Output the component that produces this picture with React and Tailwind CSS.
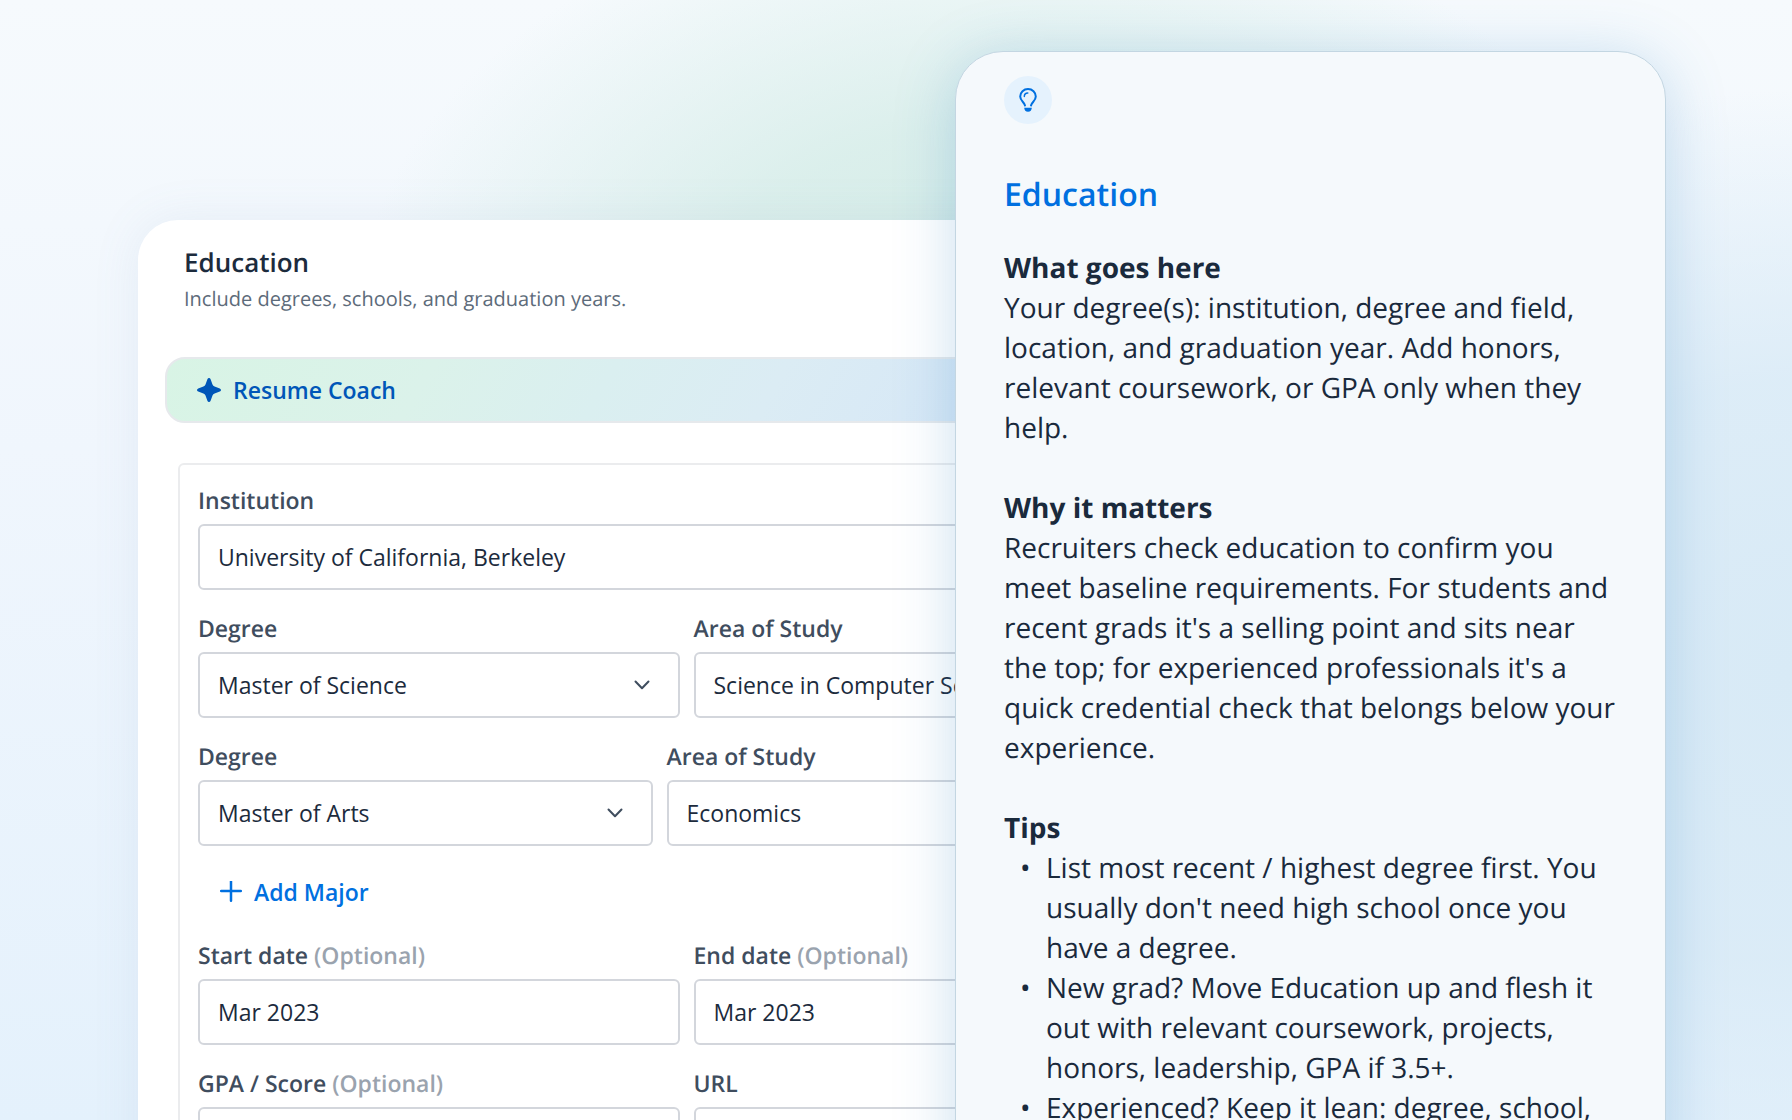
import { useId } from "react";

const sections = [
  {
    title: "What goes here",
    body: "Your degree(s): institution, degree and field, location, and graduation year. Add honors, relevant coursework, or GPA only when they help.",
  },
  {
    title: "Why it matters",
    body: "Recruiters check education to confirm you meet baseline requirements. For students and recent grads it's a selling point and sits near the top; for experienced professionals it's a quick credential check that belongs below your experience.",
  },
];

const tips = [
  "List most recent / highest degree first. You usually don't need high school once you have a degree.",
  "New grad? Move Education up and flesh it out with relevant coursework, projects, honors, leadership, GPA if 3.5+.",
  "Experienced? Keep it lean: degree, school,",
];

const control =
  "block h-[66px] w-full rounded-md border-2 border-[#d3d6dc] bg-transparent px-[18px] text-[23px] text-[#1c2b3d] outline-none";

function Label({ htmlFor, children, optional }) {
  return (
    <label htmlFor={htmlFor} className="text-[23px] leading-7 font-semibold text-[#3f4d5e]">
      {children}
      {optional && <span className="text-[#9aa3ae]"> (Optional)</span>}
    </label>
  );
}

function TextField({ label, value, optional }) {
  const id = useId();
  return (
    <div className="flex min-w-0 flex-1 flex-col gap-2.5">
      <Label htmlFor={id} optional={optional}>{label}</Label>
      <input id={id} type="text" defaultValue={value} className={control} />
    </div>
  );
}

function SelectField({ label, value }) {
  const id = useId();
  return (
    <div className="flex min-w-0 flex-1 flex-col gap-2.5">
      <Label htmlFor={id}>{label}</Label>
      <div className="relative">
        <select id={id} defaultValue={value} className={control + " appearance-none"}>
          <option>Master of Science</option>
          <option>Master of Arts</option>
        </select>
        <svg viewBox="0 0 16 10" className="pointer-events-none absolute top-7 right-[30px] h-2.5 w-4" fill="none" stroke="#3f4d5e" strokeWidth="2" strokeLinecap="round" strokeLinejoin="round">
          <path d="M1.5 1.5 8 8.3l6.500-6.800" />
        </svg>
      </div>
    </div>
  );
}

function FormCard() {
  return (
    <section className="mt-[220px] min-w-0 flex-1 rounded-t-[40px] bg-white shadow-[0_0_48px_rgba(110,140,175,0.1)]">
      <header className="px-[46px] pt-6">
        <h2 className="text-[26px] leading-9 font-semibold text-[#1c2b3d]">Education</h2>
        <p className="text-xl leading-[38px] text-[#5d6b7a]">Include degrees, schools, and graduation years.</p>
      </header>
      <button type="button" className="mx-[27px] mt-[39px] flex h-[66px] w-[calc(100%-54px)] items-center gap-3 rounded-[20px] border-2 border-[#e6e9ec] bg-linear-[120deg,#d8f4e5_0%,#dbf2ea_25%,#daeff0_42%,#dbecf4_58%,#d6e7f7_80%,#cfe0f8_100%] px-[30px] text-[23px] font-semibold text-[#0056b8]">
        <svg viewBox="0 0 24 24" className="size-6" fill="#0056b8" aria-hidden="true">
          <path d="M12 0c.7 0 1.300.4 1.600 1.200l1.900 5.200c.4 1 1.100 1.700 2.100 2.100l5.200 1.900c.8.300 1.200.9 1.200 1.600s-.4 1.300-1.200 1.600l-5.200 1.900c-1 .4-1.700 1.100-2.100 2.100l-1.900 5.200c-.3.8-.9 1.200-1.600 1.200s-1.300-.4-1.600-1.200l-1.900-5.200c-.4-1-1.100-1.700-2.100-2.100l-5.200-1.900C.4 13.300 0 12.700 0 12s.4-1.300 1.200-1.600l5.200-1.900c1-.4 1.700-1.100 2.100-2.100l1.900-5.200C10.700.4 11.300 0 12 0z" />
        </svg>
        Resume Coach
      </button>
      <form className="mx-10 mt-10 flex flex-col gap-6 rounded-md border-2 border-[#ebecee] px-[18px] pt-[21px] pb-8">
        <TextField label="Institution" value="University of California, Berkeley" />
        <div className="flex gap-3.5">
          <SelectField label="Degree" value="Master of Science" />
          <TextField label="Area of Study" value="Science in Computer Science" />
        </div>
        <div className="flex gap-3.5">
          <SelectField label="Degree" value="Master of Arts" />
          <TextField label="Area of Study" value="Economics" />
          <button type="button" aria-label="Remove major" className="w-10 shrink-0" />
        </div>
        <button type="button" className="mb-[3px] flex h-11 items-center gap-3 self-start px-[22px] text-[23px] font-semibold text-[#0070e0]">
          <svg viewBox="0 0 22 22" className="size-[22px]" fill="none" stroke="#0070e0" strokeWidth="2.500" strokeLinecap="round" aria-hidden="true">
            <path d="M11 .2v19.600M1.200 10h19.600" />
          </svg>
          Add Major
        </button>
        <div className="flex gap-3.5">
          <TextField label="Start date" value="Mar 2023" optional />
          <TextField label="End date" value="Mar 2023" optional />
        </div>
        <div className="flex gap-3.5">
          <TextField label="GPA / Score" value="" optional />
          <TextField label="URL" value="" />
        </div>
      </form>
    </section>
  );
}

function CoachPanel() {
  return (
    <aside className="relative mt-[51px] -ml-[280px] w-[711px] shrink-0 rounded-t-[48px] border border-[#c3d6e2] bg-[#f5f9fc] pt-6 pr-[46px] pl-12 text-[28px] leading-10 text-[#1a2a3c] shadow-[0_8px_60px_rgba(50,130,195,0.26)]">
      <div className="flex size-12 items-center justify-center rounded-full bg-[#e5f2fd]">
        <svg viewBox="0 0 18 24" className="h-6 w-[18px]" fill="none" stroke="#0070e0" strokeWidth="2" strokeLinecap="round" aria-hidden="true">
          <path d="M6 17.500C5.600 14.500 1.200 12.800 1.200 8.500a7.800 7.500 0 0 1 15.600 0c0 4.300-4.400 6-4.800 9" />
          <path d="M5.300 8.400A3.600 3.600 0 0 1 8.800 5" strokeWidth="1.500" />
          <path d="M5.200 19.700h7.600c0 2.300-1.500 4.100-3.800 4.100s-3.800-1.800-3.800-4.100z" fill="#0070e0" stroke="none" />
        </svg>
      </div>
      <h1 className="mt-[49px] text-[32px] leading-11 font-semibold text-[#0070e0]">Education</h1>
      {sections.map((s) => (
        <section key={s.title} className="mb-10 first-of-type:mt-[31px]">
          <h2 className="font-bold">{s.title}</h2>
          <p>{s.body}</p>
        </section>
      ))}
      <section>
        <h2 className="font-bold">Tips</h2>
        <ul className="pl-[42px]">
          {tips.map((t) => (
            <li key={t} className="before:-ml-[26px] before:inline-block before:w-[26px] before:content-['•']">{t}</li>
          ))}
        </ul>
      </section>
    </aside>
  );
}

export default function App() {
  return (
    <main className="h-screen overflow-hidden bg-[radial-gradient(ellipse_36%_38%_at_56%_28%,#d3ece6_0%,rgba(211,236,230,0.75)_45%,rgba(211,236,230,0)_100%),radial-gradient(ellipse_34%_52%_at_100%_60%,#d8eaf6_0%,rgba(216,234,246,0.8)_50%,rgba(216,234,246,0)_100%),linear-gradient(180deg,#f6fafd_0%,#f0f6fd_40%,#e4f1fc_100%)] font-['Open_Sans',sans-serif] [text-rendering:geometricPrecision]">
      <div className="flex items-stretch pr-[126px] pl-[138px]">
        <FormCard />
        <CoachPanel />
      </div>
    </main>
  );
}
